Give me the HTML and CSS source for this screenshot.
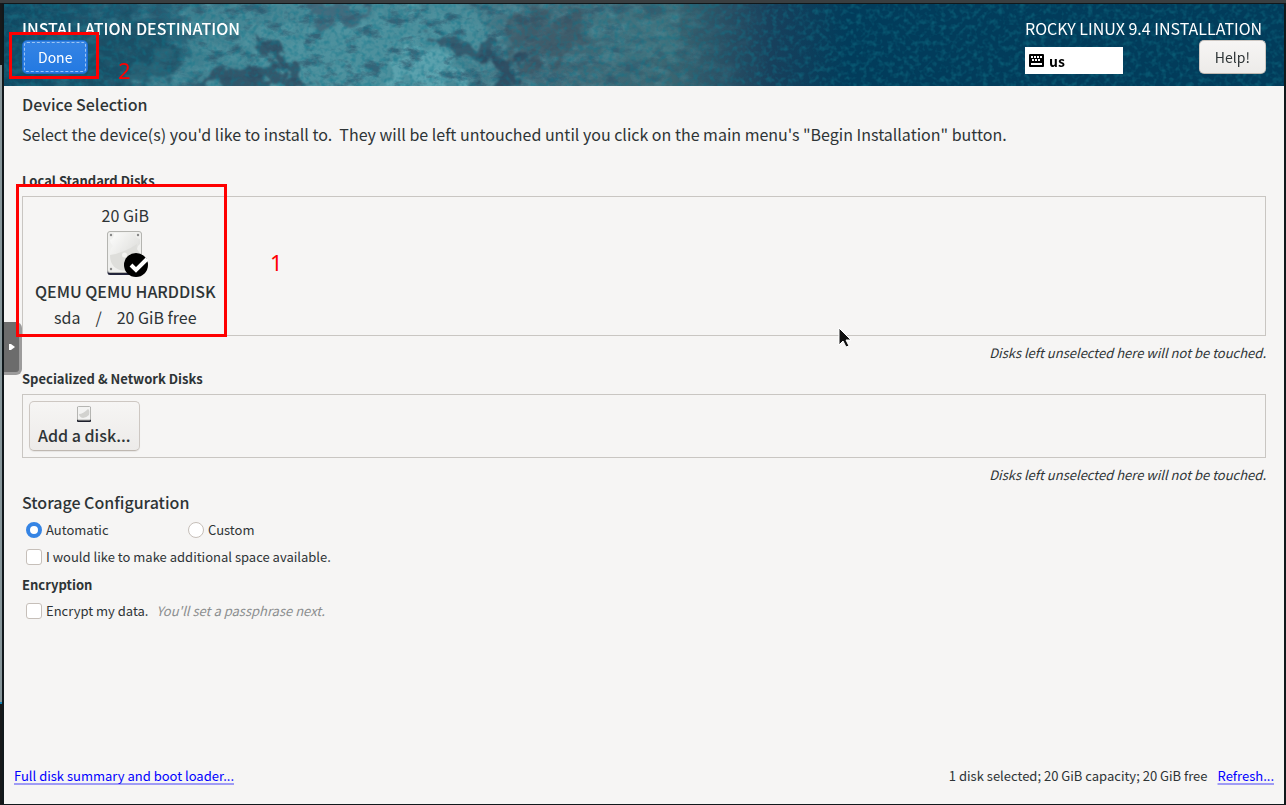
FILE: index.html
```html
<!DOCTYPE html>
<html lang="en">
<head>
<meta charset="utf-8">
<title>Installation Destination</title>
<link rel="stylesheet" href="styles.css">
</head>
<body>
<div class="window">
  <header class="banner">
    <svg class="banner-art" viewBox="0 0 1280 82" preserveAspectRatio="xMinYMin slice" color-interpolation-filters="sRGB" aria-hidden="true">
      <defs>
        <linearGradient id="sea" x1="0" x2="1" y1="0" y2="0">
          <stop offset="0" stop-color="#0e4862"/>
          <stop offset=".1" stop-color="#1f5a72"/>
          <stop offset=".17" stop-color="#346e80"/>
          <stop offset=".22" stop-color="#488896"/>
          <stop offset=".35" stop-color="#488896"/>
          <stop offset=".41" stop-color="#436b7a"/>
          <stop offset=".52" stop-color="#3c6672"/>
          <stop offset=".57" stop-color="#264c62"/>
          <stop offset=".6" stop-color="#18405c"/>
          <stop offset=".66" stop-color="#023c5b"/>
          <stop offset="1" stop-color="#023c5b"/>
        </linearGradient>
        <linearGradient id="landFade" x1="0" x2="1" y1="0" y2="0">
          <stop offset="0" stop-color="#fff" stop-opacity=".35"/>
          <stop offset=".16" stop-color="#fff"/>
          <stop offset=".4" stop-color="#fff"/>
          <stop offset=".53" stop-color="#fff" stop-opacity=".6"/>
          <stop offset=".6" stop-color="#fff" stop-opacity="0"/>
        </linearGradient>
        <mask id="landMask"><rect width="1280" height="82" fill="url(#landFade)"/></mask>
        <filter id="rough" x="-5%" y="-20%" width="110%" height="140%">
          <feTurbulence type="fractalNoise" baseFrequency=".05" numOctaves="5" seed="4"/>
          <feDisplacementMap in="SourceGraphic" scale="44" xChannelSelector="R" yChannelSelector="G"/>
          <feGaussianBlur stdDeviation=".8"/>
        </filter>
        <filter id="grainLight" x="0" y="0" width="100%" height="100%">
          <feTurbulence type="fractalNoise" baseFrequency=".06 .1" numOctaves="5" seed="9"/>
          <feColorMatrix values="0 0 0 0 .34  0 0 0 0 .6  0 0 0 0 .65  3 0 0 0 -1.3"/>
        </filter>
        <filter id="grainDark" x="0" y="0" width="100%" height="100%">
          <feTurbulence type="fractalNoise" baseFrequency=".05 .09" numOctaves="5" seed="21"/>
          <feColorMatrix values="0 0 0 0 .17  0 0 0 0 .32  0 0 0 0 .41  4 0 0 0 -2.05"/>
        </filter>
        <filter id="speckle" x="0" y="0" width="100%" height="100%">
          <feTurbulence type="fractalNoise" baseFrequency=".19" numOctaves="2" seed="5"/>
          <feColorMatrix values="0 0 0 0 .06  0 0 0 0 .46  0 0 0 0 .54  2.6 0 0 0 -1.15"/>
        </filter>
      </defs>
      <rect width="1280" height="82" fill="url(#sea)"/>
      <g filter="url(#rough)" fill="#5298a4">
        <path d="M165 0h75l15 20 60 8 90-22 70 10 25 40-45-5-30 45H240l-70 0-55-10 25-30 50-12-10-20z" opacity=".5"/>
        <path d="M400 45l45 5 25 32h-90z" fill="#60a8b3" opacity=".8"/>
        <path d="M595 10h70l10 40-30 10-50-15z" fill="#457985" opacity=".6"/>
      </g>
      <g mask="url(#landMask)">
        <rect width="1280" height="82" filter="url(#grainLight)" opacity=".5"/>
        <rect width="1280" height="82" filter="url(#grainDark)" opacity=".7"/>
      </g>
      <g filter="url(#rough)" fill="#2d4b60">
        <path d="M245 28l28 15 28 38-15-5-26-28z" opacity=".8"/>
        <path d="M190 82l35-22 40 5 50 20z" opacity=".8"/>
        <path d="M90 30l40-20 30 15 20 35-50 25-50-10z" fill="#18485f" opacity=".55"/>
        <path d="M300 0h75l-30 18-30 8z" fill="#3f6073" opacity=".7"/>
        <path d="M420 32l60 4 38 25h-30z" opacity=".75"/>
        <path d="M478 50l20-4 18 18-6 18h-25z" opacity=".9"/>
        <path d="M500 15l60-8 30 25-30 25-50 5z" fill="#3d4d5c" opacity=".5"/>
      </g>
      <rect width="1280" height="82" filter="url(#speckle)" opacity=".5"/>
    </svg>
    <div class="banner-start">
      <h1 class="banner-title">INSTALLATION DESTINATION</h1>
      <div class="marked">
        <button class="button button-primary" type="button">Done</button>
        <span class="mark mark-done"></span>
        <span class="mark-number mark-number-two">2</span>
      </div>
    </div>
    <div class="banner-end">
      <div class="product">ROCKY LINUX 9.4 INSTALLATION</div>
      <div class="banner-tools">
        <button class="layout" type="button">
          <svg width="15" height="13" viewBox="0 0 15 13" aria-hidden="true">
            <rect width="15" height="13" rx="1" fill="#000"/>
            <path d="M2 2h2v2H2zM5 2h2v2H5zM8 2h2v2H8zM11 2h2v2h-2zM3 5h2v2H3zM6 5h2v2H6zM9 5h2v2H9zM2 9h11v2H2z" fill="#fff"/>
          </svg>
          us
        </button>
        <button class="button" type="button">Help!</button>
      </div>
    </div>
  </header>

  <main class="content">
    <h2 class="heading">Device Selection</h2>
    <p class="intro">Select the device(s) you'd like to install to.&nbsp; They will be left untouched until you click on the main menu's "Begin Installation" button.</p>

    <h3 class="subheading subheading-local">Local Standard Disks</h3>
    <section class="panel panel-local">
      <div class="disk">
        <span>20 GiB</span>
        <svg class="disk-icon" width="48" height="48" viewBox="0 0 48 48" aria-hidden="true">
          <defs>
            <linearGradient id="metal" x1="0" y1="0" x2="1" y2="1"><stop offset="0" stop-color="#fdfdfc"/><stop offset=".5" stop-color="#e8e8e6"/><stop offset="1" stop-color="#d3d3d0"/></linearGradient>
          </defs>
          <rect x="6.500" y="3" width="34" height="43" rx="2.500" fill="#22243a"/>
          <rect x="6.500" y="2.500" width="34" height="41" rx="2.500" fill="#f0f0ee" stroke="#b4b4b0"/>
          <path d="M13 4h21q0 5 5 6v5q-3 2-3 5 3 3 3 8 0 13-14 13-16 0-16-16 0-5 3-8-3-3-3-6 4-1 4-7z" fill="url(#metal)"/>
          <path d="M9 26q14-2 27-11-1 5 1 9 2 18-12 18Q9 41 9 26z" fill="#dededb"/>
          <circle cx="23.500" cy="26" r="2.500" fill="#f4f4f2"/>
          <g fill="#888"><circle cx="10" cy="6" r="1.200"/><circle cx="37" cy="6" r="1.200"/><circle cx="10" cy="40" r="1.200"/></g>
          <circle cx="35" cy="36" r="12" fill="#000"/>
          <path d="M30 36l5 5 11-11" fill="none" stroke="#fff" stroke-width="4"/>
        </svg>
        <strong>QEMU QEMU HARDDISK</strong>
        <span class="disk-meta"><span>sda</span><span>/</span><span>20 GiB free</span></span>
      </div>
      <span class="mark mark-disk"></span>
      <span class="mark-number mark-number-one">1</span>
    </section>
    <p class="note">Disks left unselected here will not be touched.</p>

    <h3 class="subheading">Specialized &amp; Network Disks</h3>
    <section class="panel panel-network">
      <button class="button add-disk" type="button">
        <svg width="16" height="18" viewBox="0 0 16 18" aria-hidden="true">
          <rect x="1" y="2" width="14" height="15" rx="1" fill="#1d1f2b"/>
          <rect x="1.500" y="1.500" width="13" height="13.500" rx="1" fill="#f3f3f2" stroke="#b5b5b2"/>
          <path d="M3 9q4 0 9-5 2 1 1 6-3 3-6 3-4-1-4-4z" fill="#d2d2cf"/>
        </svg>
        Add a disk...
      </button>
    </section>
    <p class="note">Disks left unselected here will not be touched.</p>

    <h2 class="heading">Storage Configuration</h2>
    <div class="options">
      <label class="option"><input class="tick radio" type="radio" name="storage" checked>Automatic</label>
      <label class="option"><input class="tick radio" type="radio" name="storage">Custom</label>
    </div>
    <label class="option"><input class="tick" type="checkbox">I would like to make additional space available.</label>
    <h3 class="subheading subheading-encryption">Encryption</h3>
    <label class="option"><input class="tick" type="checkbox">Encrypt my data. <em class="hint">You'll set a passphrase next.</em></label>
  </main>

  <footer class="footer">
    <a href="#summary">Full disk summary and boot loader...</a>
    <span class="footer-end">1 disk selected; 20 GiB capacity; 20 GiB free <a href="#refresh">Refresh...</a></span>
  </footer>

  <button class="drawer" type="button" aria-label="Open control bar"><svg width="6" height="8" viewBox="0 0 6 8" aria-hidden="true"><path d="M0 1h2l4 3-4 3H0z" fill="#fff"/></svg></button>
  <svg class="pointer" width="14" height="22" viewBox="0 0 14 22" aria-hidden="true">
    <path d="M1 1v17l4-4 3 6 3-1-3-6h5z" fill="#111" stroke="#fff"/>
  </svg>
</div>
</body>
</html>
```
FILE: styles.css
```css
* { box-sizing: border-box; }

body {
  margin: 0;
  min-height: 100vh;
  display: flex;
  padding: 4px 2px 1px 4px;
  color: #2e3436;
  font: 13px/20px "Noto Sans CJK SC", "Noto Sans", sans-serif;
  background:
    linear-gradient(#3a3f41 0 3px, transparent 3px),
    linear-gradient(90deg, transparent 2px, #11181b 2px),
    linear-gradient(#17191a 0 65px, #87969a 65px 702px, #1180b0 702px 704px, #17191a 704px);
}

h1, h2, h3, p { margin: 0; }
button, input { font: inherit; color: inherit; margin: 0; }

.window {
  position: relative;
  flex: 1;
  display: flex;
  flex-direction: column;
  background: #f6f5f4;
}

.banner {
  position: relative;
  display: flex;
  justify-content: space-between;
  padding: 12px 18px;
  color: #fff;
  font-size: 16px;
  line-height: 24px;
  background: #023c5b;
}
.banner-art { position: absolute; inset: 0; width: 100%; height: 100%; }
.banner-start, .banner-end { position: relative; }
.banner-end { min-width: 241px; }
.banner-title { font-size: 16px; font-weight: 500; }
.banner-tools { display: flex; justify-content: space-between; align-items: flex-end; }
.marked { position: relative; width: fit-content; display: flex; }

.button {
  height: 34px;
  padding: 0 15px;
  border: 1px solid #cdc7c2;
  border-bottom-color: #bfb8b1;
  border-radius: 5px;
  background: linear-gradient(#f6f5f4, #edebe9);
  color: #2e3436;
  font-size: 14px;
  line-height: 20px;
}
.button-primary {
  border-color: #1b6acb;
  background: linear-gradient(#3584e4, #2379e2);
  color: #fff;
  outline: 1px dashed #9cc3f3;
  outline-offset: -3px;
}
.layout {
  display: flex;
  align-items: center;
  gap: 5px;
  width: 98px;
  height: 27px;
  padding: 0 4px;
  border: 0;
  background: #fff;
  color: #000;
  font-size: 14px;
  font-weight: 700;
}

.mark { position: absolute; border: 3px solid #f00; pointer-events: none; }
.mark-done { inset: -8px -11px -5px -13px; }
.mark-disk { left: -7px; top: -13px; width: 211px; height: 153px; z-index: 2; }
.mark-number { position: absolute; color: #f00; font: 22px/24px "Noto Sans", sans-serif; }
.mark-number-two { left: 96px; top: 18px; }
.mark-number-one { left: 247px; top: 53px; }

.content { flex: 1; padding: 6px 18px; }
.heading { font-size: 16px; line-height: 24px; font-weight: 500; }
.intro { margin-top: 6px; font-size: 16px; line-height: 24px; }
.subheading { margin-bottom: 5px; font-size: 13px; line-height: 20px; font-weight: 700; }
.subheading-local { margin-top: 25px; }
.subheading-encryption { margin: 8px 0 6px; }

.panel { position: relative; display: flex; border: 1px solid #c9c6c2; }
.panel-local { padding: 6px 12px; }
.panel-network { padding: 6px; }
.disk {
  display: flex;
  flex-direction: column;
  align-items: center;
  font-size: 16px;
  line-height: 24px;
}
.disk-icon { margin-top: 2px; }
.disk strong { font-weight: 500; line-height: 28px; }
.disk-meta { display: flex; gap: 15px; }
.note { margin: 7px 0 6px; text-align: right; font-style: italic; }
.add-disk {
  display: flex;
  flex-direction: column;
  align-items: center;
  height: 50px;
  padding: 3px 8px;
  font-size: 16px;
  line-height: 24px;
  font-weight: 500;
  box-shadow: 0 1px 1px #0001;
}
.note + .heading { margin-top: -1px; }

.options { display: flex; margin: 6px 0 7px; }
.options .option { width: 162px; }
.option { display: flex; align-items: center; gap: 4px; padding-left: 4px; }
.tick {
  appearance: none;
  width: 16px;
  height: 16px;
  border: 1px solid #c6bfb9;
  border-radius: 3px;
  background: #fff;
}
.radio { border-radius: 50%; }
.radio:checked { border: 4px solid #3584e4; }
.hint { margin-left: 4px; color: #8b8e8f; }

.footer { display: flex; justify-content: space-between; padding: 0 10px 18px; }
.footer a {
  color: #00f;
  text-decoration-color: #9f9cf5;
  text-decoration-thickness: 2px;
  text-decoration-skip-ink: none;
  text-underline-offset: 2px;
}
.footer-end { display: flex; gap: 10px; }

.drawer {
  position: absolute;
  left: 0;
  top: 318px;
  width: 18px;
  height: 53px;
  padding: 0 0 3px;
  border: 0 solid #9c9b9b;
  border-width: 0 3px 3px 0;
  border-radius: 0 6px 6px 0;
  background: #6c6c6c;
}
.pointer { position: absolute; left: 834px; top: 323px; z-index: 3; }
```
